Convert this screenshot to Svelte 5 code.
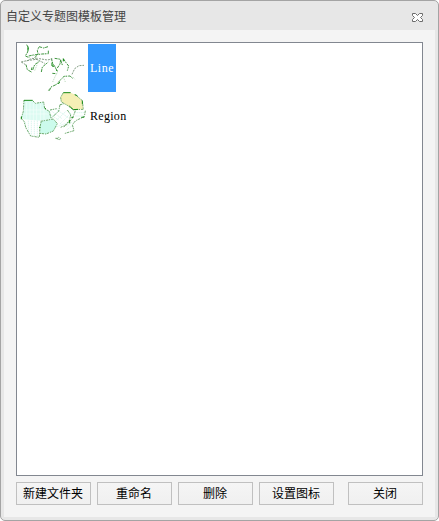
<script>
  const templates = [
    { name: 'Line', selected: true },
    { name: 'Region', selected: false }
  ];
  const actions = ['新建文件夹', '重命名', '删除', '设置图标'];
</script>

<div class="window">
  <header>
    <span>自定义专题图模板管理</span>
    <svg class="close" width="13" height="11" viewBox="0 0 13 11">
      <path d="M1.5 1.5h3l2 2 2-2h3v2l-2 2 2 2v2h-3l-2-2-2 2h-3v-2l2-2-2-2z" fill="#fff" stroke="#6c6c6c" />
    </svg>
  </header>
  <main>
    <div class="list">
      {#each templates as t}
        <div class="row">
          <svg width="67" height="48" viewBox="21 12 201 144" fill="none" overflow="visible" stroke-linejoin="round">
            {#if t.name === 'Line'}
              <g stroke="#3f963f" stroke-width="3" stroke-dasharray="9 2 5 3">
                <path d="M38 14l5 9-2 13-7 12 12 5M102 20l-13 4-14-4-5 12 2 9-10 13M44 48l14-3 26-3 20-1M103 32v8" />
                <path d="M36 74l4 15 14 8M82 96l3-15 18-15M56 90l6-16 14-10M54 82l-2 8" />
                <path d="M112 55l4 15 8 12 4 10M122 55l18 3-2 14-8 12M148 56l8 12 8 10-4 14M140 60l6 18M115 100l12 1M106 152l5-11 17-8 12-14 10-10 18-1 8 7" />
              </g>
              <path d="M22 66l16-4 22-3 16-3 24 4 15-3M22 66l14 9M66 57l26 13M38 63l16-8 14 2M174 103l8-17 13-9 15-1" stroke="#7b967b" stroke-width="2.8" stroke-dasharray="6 3" />
              <path d="M114 68v10l6 1M127 88l3 6M133 132l4-6M148 56v8M42 20v12" stroke="#078407" stroke-width="3" />
              <path d="M116 126l8-18 6-10M150 116l4 10M60 45l12 10M74 62l-12 30M178 112l5 6" stroke="#bfdcbf" stroke-width="3" stroke-dasharray="4 3" />
            {:else}
              <path d="M30 36l26 2 8 8 25-4 3 20 16 8 4 22-32 6-50-4-8-6 7-20z" fill="#dcfbf2" />
              <path d="M38 42v50M48 42v52M58 46v50M68 50v46M79 48v48M90 64v30M30 66h62M30 78h75" stroke="#f4fffc" stroke-width="2" />
              <path d="M80 100l38-7 12 14-12 22-22 9-18-2z" fill="#ccfbec" />
              <path d="M34 102v16M43 98v38M52 98v44M61 98v46M70 98v46M100 74l34 22M108 66l36 26M124 62l40 28M108 92l28-26M124 100l34-32M138 108l34-34M182 74h30M184 84h26M128 116l34-12M158 126l20-16M158 116l16-14M164 72l8 12" stroke="#d3f4ea" stroke-width="2.5" stroke-dasharray="4 2" />
              <path d="M148 14h22l14 6 21 18 3 26-30 1-18-13-18-10-3-14z" fill="#f5efb5" />
              <g stroke="#6faa6f" stroke-width="3" stroke-dasharray="7 2 4 3">
                <path d="M56 38l8 8 25-4 3 20 14 8 5 21M30 36l-2 34-6 20 8 10 6 20 14 24 26 4 2-32 4-16M80 100l38-7 12 14-12 22-22 9-18-2" />
                <path d="M148 14l-8 14 2 14 18 10 18 13 30-1-3-26-21-18M138 50l-4 20-22 20M138 50l10-2M160 66l10 14-3 16-18 22M184 68l-8 22-18 20-18 8M214 68l-3 18-26 12-10 12 5 18-30 9" />
                <path d="M125 151h7l2-3 6 4-4 3zM103 8l6-8M108 66l20-4" />
              </g>
              <path d="M30 37h26M148 14h22M166 54l12 11 14-1M75 118h5M172 88h6M22 86v8M205 38v10M211 87l-9 1M182 20l8 3M92 60l4 3M167 96v10" stroke="#168816" stroke-width="3" />
            {/if}
          </svg>
          <span class="label" class:selected={t.selected}>{t.name}</span>
        </div>
      {/each}
    </div>
    <footer>
      {#each actions as a}<button>{a}</button>{/each}
      <button class="last">关闭</button>
    </footer>
  </main>
</div>

<style>
  .window {
    box-sizing: border-box;
    width: 439px;
    height: 521px;
    display: flex;
    flex-direction: column;
    border: 1px solid #a4a4a4;
    border-radius: 5px;
    background: #e7e7e7;
    padding: 0 3px 3px;
    font: 12px/16px 'Noto Sans CJK SC', sans-serif;
  }
  header {
    height: 29px;
    display: flex;
    justify-content: space-between;
    align-items: center;
    padding: 0 11px 0 2px;
    color: #444;
  }
  .close { margin-top: 4px; }
  main {
    flex: 1;
    background: #f4f4f4;
    padding: 12px 12px 0;
  }
  .list {
    box-sizing: border-box;
    width: 407px;
    height: 434px;
    border: 1px solid #828790;
    background: #fff;
    padding: 1px 0 0 4px;
  }
  .row { display: flex; height: 48px; }
  .label {
    display: flex;
    align-items: center;
    padding: 0 2px;
    font: 12px 'Liberation Serif', serif;
    letter-spacing: .3px;
    color: #000;
  }
  .selected { background: #3399ff; color: #fff; letter-spacing: .5px; }
  footer { display: flex; gap: 6px; margin-top: 6px; }
  button {
    box-sizing: border-box;
    width: 75px;
    height: 23px;
    padding: 0 1px 2px 0;
    border: 1px solid #c0c0c0;
    background: linear-gradient(#f5f5f5, #f0f0f0);
    color: #000;
    font: inherit;
  }
  .last { margin-left: auto; }
</style>
